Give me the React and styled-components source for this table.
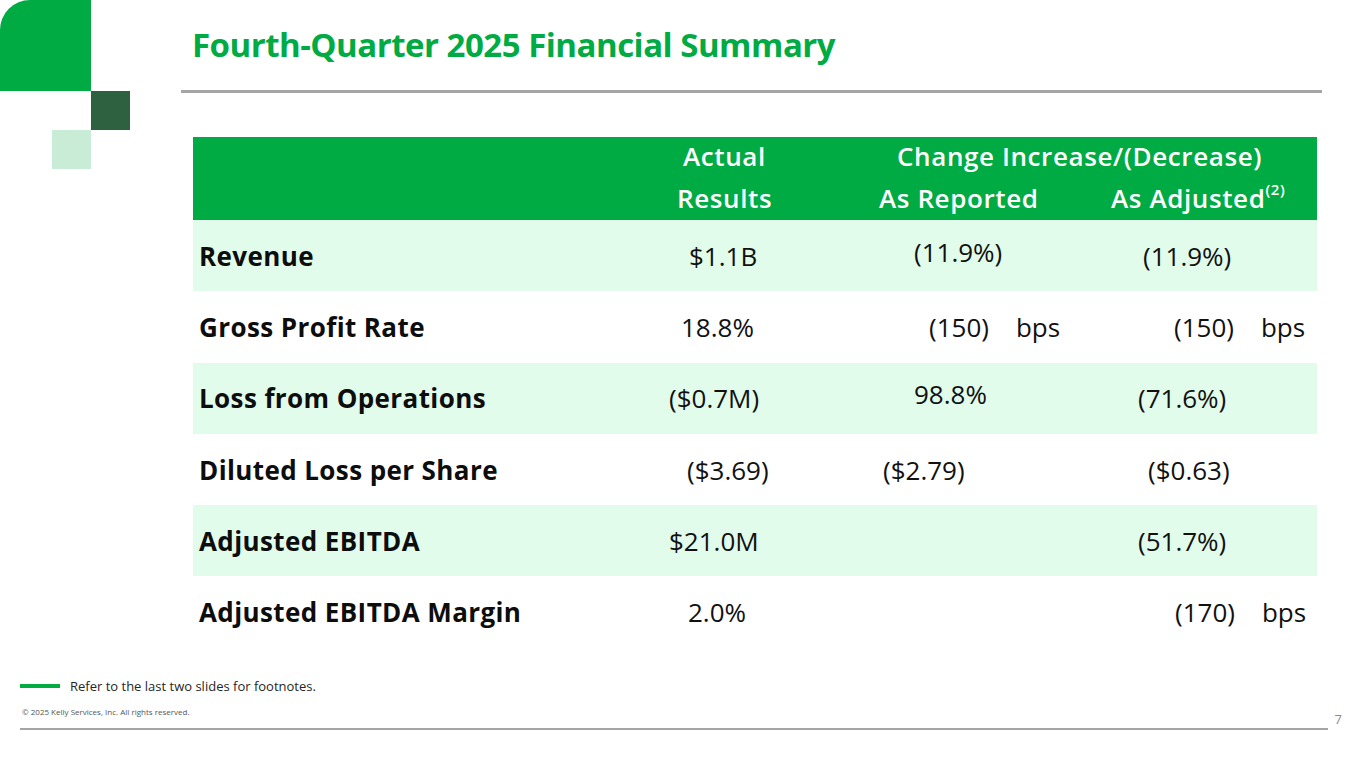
import styled, { createGlobalStyle } from "styled-components";

const GREEN = "#00ab43";
const LIGHT_ROW = "#e1fcea";
const RULE_GREY = "#a5a5a5";

const rows = [
  {
    label: "Revenue",
    tint: true,
    actual: { text: "$1.1B", pad: 76 },
    reported: { text: "(11.9%)", pad: 101, lift: 4 },
    adjusted: { text: "(11.9%)", pad: 50 },
  },
  {
    label: "Gross Profit Rate",
    actual: { text: "18.8%", pad: 68 },
    reported: { text: "(150)", unit: "bps", pad: 116 },
    adjusted: { text: "(150)", unit: "bps", pad: 81 },
  },
  {
    label: "Loss from Operations",
    tint: true,
    actual: { text: "($0.7M)", pad: 56 },
    reported: { text: "98.8%", pad: 101, lift: 4 },
    adjusted: { text: "(71.6%)", pad: 45 },
  },
  {
    label: "Diluted Loss per Share",
    actual: { text: "($3.69)", pad: 74 },
    reported: { text: "($2.79)", pad: 70 },
    adjusted: { text: "($0.63)", pad: 55 },
  },
  {
    label: "Adjusted EBITDA",
    tint: true,
    actual: { text: "$21.0M", pad: 56 },
    reported: null,
    adjusted: { text: "(51.7%)", pad: 45 },
  },
  {
    label: "Adjusted EBITDA Margin",
    actual: { text: "2.0%", pad: 75 },
    reported: null,
    adjusted: { text: "(170)", unit: "bps", pad: 82 },
  },
];

const Value = ({ cell }) => {
  if (!cell) return <Cell />;
  return (
    <Cell $pad={cell.pad} $lift={cell.lift}>
      <span>{cell.text}</span>
      {cell.unit && <span>{cell.unit}</span>}
    </Cell>
  );
};

const App = () => {
  return (
    <>
      <GlobalStyle />
      <Slide>
        <Logo width="130" height="169" viewBox="0 0 130 169" aria-hidden="true">
          <path d="M30 0 H91 V91 H0 V30 A30 30 0 0 1 30 0 Z" fill={GREEN} />
          <rect x="91" y="91" width="39" height="39" fill="#2e6140" />
          <rect x="52" y="130" width="39" height="39" fill="#c9ecd6" />
        </Logo>
        <Main>
          <Title>Fourth-Quarter 2025 Financial Summary</Title>
          <TitleRule />
          <Table>
            <HeadRow>
              <HeadCell $row={1} $col="2" $pad={70}>Actual</HeadCell>
              <HeadCell $row={1} $col="3 / span 2" $pad={84}>
                Change Increase/(Decrease)
              </HeadCell>
              <HeadCell $row={2} $col="2" $pad={64}>Results</HeadCell>
              <HeadCell $row={2} $col="3" $pad={66}>As Reported</HeadCell>
              <HeadCell $row={2} $col="4" $pad={18}>
                As Adjusted<Sup>(2)</Sup>
              </HeadCell>
            </HeadRow>
            {rows.map((row) => (
              <Row key={row.label} $tint={row.tint}>
                <Label>{row.label}</Label>
                <Value cell={row.actual} />
                <Value cell={row.reported} />
                <Value cell={row.adjusted} />
              </Row>
            ))}
          </Table>
        </Main>
        <Footer>
          <Note>
            <NoteBar />
            Refer to the last two slides for footnotes.
          </Note>
          <Copyright>© 2025 Kelly Services, Inc. All rights reserved.</Copyright>
          <BottomRule>
            <PageNumber>7</PageNumber>
          </BottomRule>
        </Footer>
      </Slide>
    </>
  );
};

const GlobalStyle = createGlobalStyle`
  html, body {
    margin: 0;
    padding: 0;
    background: #ffffff;
  }
  body {
    font-family: "Open Sans", "Liberation Sans", sans-serif;
    color: #111111;
  }
`;

const Slide = styled.div`
  width: 1365px;
  height: 768px;
  display: grid;
  grid-template-columns: 181px 1141px;
  grid-template-rows: 664px 1fr;
  overflow: hidden;
  background: #ffffff;
`;

const Logo = styled.svg`
  display: block;
  grid-column: 1;
  grid-row: 1;
`;

const Main = styled.div`
  grid-column: 2;
  grid-row: 1;
  display: flex;
  flex-direction: column;
`;

const Title = styled.h1`
  margin: 0;
  padding: 22px 0 0 11px;
  height: 46px;
  font-family: "Open Sans", "Liberation Sans", sans-serif;
  font-weight: 700;
  font-size: 33px;
  line-height: 46px;
  letter-spacing: -0.5px;
  color: ${GREEN};
  white-space: nowrap;
`;

const TitleRule = styled.div`
  margin-top: 22px;
  height: 3px;
  background: ${RULE_GREY};
`;

const Table = styled.div`
  margin: 44px 0 0 12px;
  width: 1124px;
  display: flex;
  flex-direction: column;
`;

const columns = "420px 200px 280px 224px";

const HeadRow = styled.div`
  display: grid;
  grid-template-columns: ${columns};
  grid-template-rows: 40px 43px;
  background: ${GREEN};
  color: #ffffff;
`;

const HeadCell = styled.div`
  grid-column: ${(p) => p.$col};
  grid-row: ${(p) => p.$row};
  padding-left: ${(p) => p.$pad}px;
  padding-top: ${(p) => (p.$row === 1 ? 0 : 2)}px;
  font-weight: 600;
  font-size: 26px;
  line-height: 38px;
  letter-spacing: 0.6px;
  white-space: nowrap;
`;

const Sup = styled.sup`
  font-size: 15px;
  vertical-align: 13px;
  line-height: 0;
`;

const Row = styled.div`
  display: grid;
  grid-template-columns: ${columns};
  height: 71.3px;
  align-items: center;
  background: ${(p) => (p.$tint ? LIGHT_ROW : "#ffffff")};
`;

const Label = styled.div`
  padding-left: 6px;
  font-weight: 700;
  font-size: 26px;
  letter-spacing: 0.4px;
  color: #0d0d0d;
  white-space: nowrap;
`;

const Cell = styled.div`
  display: flex;
  gap: 27px;
  padding-left: ${(p) => p.$pad ?? 0}px;
  transform: translateY(${(p) => -(p.$lift ?? 0)}px);
  font-size: 26px;
  font-weight: 400;
  color: #111111;
  white-space: nowrap;
`;

const Footer = styled.div`
  grid-column: 1 / span 2;
  grid-row: 2;
  padding: 12px 0 0 20px;
  width: 1308px;
`;

const Note = styled.div`
  display: flex;
  align-items: center;
  gap: 10px;
  height: 20px;
  font-size: 13px;
  color: #262626;
`;

const NoteBar = styled.span`
  display: block;
  width: 40px;
  height: 4px;
  background: ${GREEN};
`;

const Copyright = styled.div`
  margin: 10px 0 0 2px;
  height: 12px;
  font-size: 8px;
  line-height: 12px;
  color: #555555;
`;

const BottomRule = styled.div`
  position: relative;
  margin-top: 10px;
  height: 2px;
  background: ${RULE_GREY};
`;

const PageNumber = styled.span`
  position: absolute;
  right: -14px;
  bottom: 2px;
  font-size: 13px;
  color: #8a8a8a;
`;

export default App;
